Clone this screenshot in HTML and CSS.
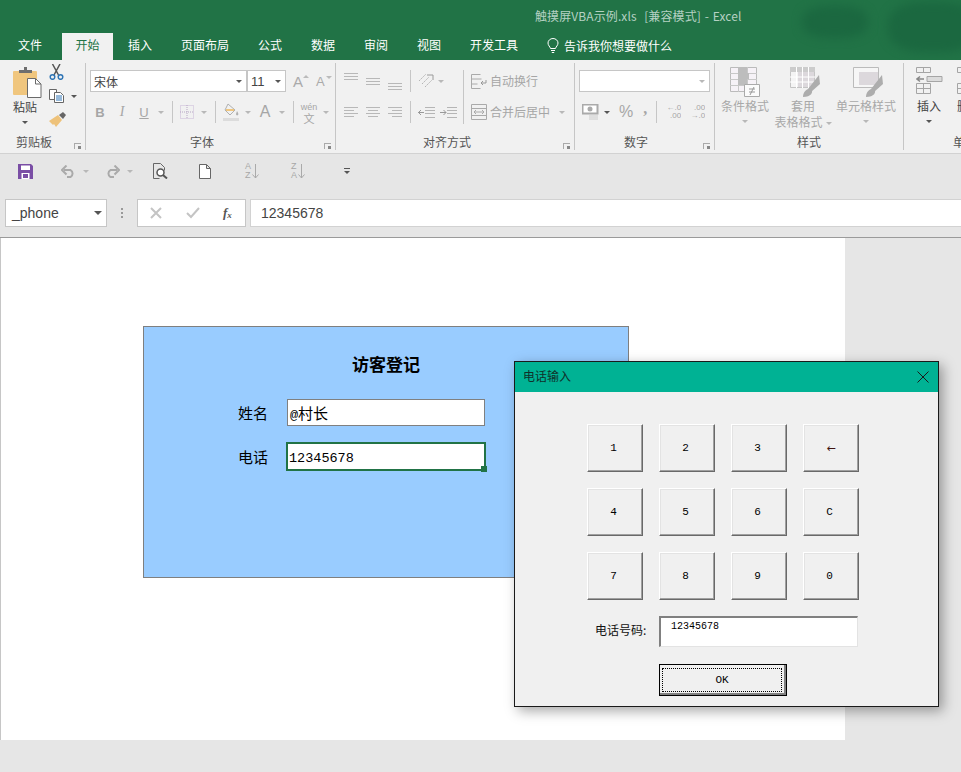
FILE: index.html
```html
<!DOCTYPE html>
<html>
<head>
	<meta charset="utf-8">
	<title>触摸屏VBA示例.xls</title>
	<link rel="stylesheet" href="styles.css">
</head>
<body>
	<div id="app">
		<div class="top">
			<div class="blob blob-a"></div>
			<div class="blob blob-b"></div>
			<div class="title">触摸屏VBA示例.xls&nbsp; [兼容模式] - Excel</div>
			<ul class="tabs">
				<li class="tab-file">文件</li>
				<li class="current">开始</li>
				<li class="tab-insert">插入</li>
				<li class="tab-page">页面布局</li>
				<li class="tab-formula">公式</li>
				<li class="tab-data">数据</li>
				<li class="tab-review">审阅</li>
				<li class="tab-view">视图</li>
				<li class="tab-dev">开发工具</li>
				<li class="tab-tell">
					<svg width="12" height="16" viewBox="0 0 12 16"><path d="M3.5 10.500C3 8.500 1 7.500 1 5a5 4.500 0 0 1 10 0c0 2.500-2 3.500-2.500 5.500zM4 12.500h4M4.800 14.500h2.400" fill="none" stroke="#fff"/></svg>
					<span>告诉我你想要做什么</span>
				</li>
			</ul>
		</div>

		<div class="ribbon">
			<section class="group g-clip">
				<div class="clip-body">
					<div class="big-col">
						<svg class="paste-icon" width="29" height="31" viewBox="0 0 29 31">
							<rect x="0" y="4" width="24" height="24" rx="1" fill="#f0c67e"/>
							<path d="M6 6V3h5V0h3v3h5v3z" fill="#6e6e6e"/>
							<path d="M14.500 11.500h8l5.500 5.500v13.500H14.500z" fill="#fff" stroke="#6a6a6a"/>
							<path d="M22.500 11.500v5.500H28" fill="none" stroke="#6a6a6a"/>
						</svg>
						<span class="big-text dark">粘贴</span>
						<i class="caret dark-caret"></i>
					</div>
					<div class="small-col">
						<svg width="15" height="16" viewBox="0 0 15 16"><path d="M3.500 0l6 11M11 0L5 11" stroke="#555" stroke-width="1.500" fill="none"/><circle cx="3.500" cy="13" r="2.300" fill="none" stroke="#2f75b5" stroke-width="1.500"/><circle cx="11.500" cy="13" r="2.300" fill="none" stroke="#2f75b5" stroke-width="1.500"/></svg>
						<div class="copy-row">
							<svg width="16" height="14" viewBox="0 0 16 14"><path d="M.5.500h7v10h-7z" fill="#fff" stroke="#666"/><path d="M5.500 3.500h6l3 3v7h-9z" fill="#fff" stroke="#666"/><path d="M7 7h6M7 9h6M7 11h6" stroke="#2f75b5"/></svg>
							<i class="caret dark-caret"></i>
						</div>
						<svg width="17" height="15" viewBox="0 0 17 15"><path d="M10 3l4-3 3 3-3 4z" fill="#666"/><path d="M0 9l9-6 4 5-6 7-2-3-1 1z" fill="#eec27a"/></svg>
					</div>
				</div>
				<div class="group-name g-name-clip">剪贴板</div>
				<i class="launcher"></i>
			</section>

			<section class="group g-font">
				<div class="row row-top">
					<div class="combo combo-font"><span>宋体</span><i class="caret dark-caret"></i></div>
					<div class="combo combo-size"><span>11</span><i class="caret dark-caret"></i></div>
					<span class="grow-a">A<i class="up"></i></span>
					<span class="grow-a small-a">A<i class="down"></i></span>
				</div>
				<div class="row row-bottom">
					<b class="tool b-tool">B</b>
					<em class="tool i-tool">I</em>
					<u class="tool u-tool">U</u>
					<i class="caret-box"><i class="caret"></i></i>
					<i class="sep sep-tight"></i>
					<span class="tool">
						<svg width="14" height="14" viewBox="0 0 14 14"><path d="M.5.500h13v13H.5z" fill="none" stroke="#c9b6d6" stroke-dasharray="1 1"/><path d="M7 0v14M0 7h14" stroke="#b7a7c4" stroke-dasharray="1 1"/></svg>
					</span>
					<i class="caret-box"><i class="caret"></i></i>
					<i class="sep"></i>
					<span class="tool">
						<svg width="17" height="19" viewBox="0 0 17 19"><path d="M5 1l7 6-5 5-5-5z" fill="none" stroke="#b0b0b0"/><path d="M3 7h8" stroke="#f0c67e" stroke-width="2"/><path d="M14 8c1 2 2 3 1 4s-2 0-2-1z" fill="#b0b0b0"/><rect x="0" y="15" width="16" height="3" fill="#dcdcdc"/></svg>
					</span>
					<i class="caret-box"><i class="caret"></i></i>
					<span class="tool text-a">A</span>
					<i class="caret-box"><i class="caret"></i></i>
					<i class="sep"></i>
					<span class="tool wen"><small>wén</small><span>文</span></span>
					<i class="caret-box"><i class="caret"></i></i>
				</div>
				<div class="group-name g-name-font">字体</div>
				<i class="launcher"></i>
			</section>

			<section class="group g-align">
				<div class="row row-top">
					<span class="tool lines-top"><i></i><i></i><i></i></span>
					<span class="tool lines-mid"><i></i><i></i><i></i></span>
					<span class="tool lines-low"><i></i><i></i><i></i></span>
					<i class="sep sep-wide"></i>
					<span class="tool">
						<svg width="17" height="16" viewBox="0 0 17 16"><path d="M1 8l7-7M4 11l7-7M7 14l7-7" stroke="#b5b5b5" stroke-dasharray="2 1"/><path d="M9 2h6v5" fill="none" stroke="#9a9a9a"/></svg>
					</span>
					<i class="caret-box orient-caret"><i class="caret"></i></i>
					<i class="sep sep-tall"></i>
					<span class="text-btn">
						<svg width="16" height="15" viewBox="0 0 16 15"><path d="M.5.500h9M.5 14.500h9M.5.500v14M.5 5h10M.5 10h6" fill="none" stroke="#aaa"/><path d="M15 6v3h-5m2-2l-2 2 2 2" fill="none" stroke="#999"/></svg>
						<span>自动换行</span>
					</span>
				</div>
				<div class="row row-bottom">
					<span class="tool lines-left"><i></i><i></i><i></i><i></i></span>
					<span class="tool lines-center"><i></i><i></i><i></i><i></i></span>
					<span class="tool lines-right"><i></i><i></i><i></i><i></i></span>
					<i class="sep sep-wide"></i>
					<span class="tool">
						<svg width="17" height="11" viewBox="0 0 17 11"><path d="M7 .5h10M7 3.500h10M7 6.500h10M7 10.500h10" stroke="#b5b5b5"/><path d="M6 5.500H0M3 3L.5 5.500 3 8" fill="none" stroke="#999"/></svg>
					</span>
					<span class="tool">
						<svg width="17" height="11" viewBox="0 0 17 11"><path d="M7 .5h10M7 3.500h10M7 6.500h10M7 10.500h10" stroke="#b5b5b5"/><path d="M0 5.500h6M3.500 3L6 5.500 3.500 8" fill="none" stroke="#999"/></svg>
					</span>
					<i class="merge-gap"></i>
					<span class="text-btn">
						<svg width="16" height="16" viewBox="0 0 16 16"><path d="M.5.500h15v15H.5zM.5 4.500h15M.5 11.500h15" fill="none" stroke="#aaa"/><path d="M3 8h10M5 6L3 8l2 2M11 6l2 2-2 2" fill="none" stroke="#aaa"/></svg>
						<span>合并后居中</span>
					</span>
					<i class="caret merge-caret"></i>
				</div>
				<div class="group-name g-name-align">对齐方式</div>
				<i class="launcher"></i>
			</section>

			<section class="group g-num">
				<div class="row row-top"><div class="combo combo-num"><span></span><i class="caret"></i></div></div>
				<div class="row row-bottom">
					<svg class="money" width="17" height="16" viewBox="0 0 17 16"><path d="M.5.500h15v9H.5z" fill="#fff" stroke="#aaa" stroke-width="2"/><circle cx="8" cy="5" r="2.500" fill="#aaa"/><path d="M7 11h9M7 13h9M7 15h9" stroke="#ccc"/></svg>
					<i class="caret dark-caret money-caret"></i>
					<span class="percent">%</span>
					<span class="comma">,</span>
					<i class="sep sep-num"></i>
					<span class="dec-icon"><span>←.0</span><span>.00</span></span>
					<span class="dec-icon dec-right"><span>.00</span><span>→.0</span></span>
				</div>
				<div class="group-name g-name-num">数字</div>
				<i class="launcher"></i>
			</section>

			<section class="group g-style">
				<div class="big-row">
					<div class="big-col style-cond">
						<svg width="30" height="30" viewBox="0 0 30 30">
							<path d="M.5.500h26v24H.5z" fill="#f6f2f7" stroke="#bbb"/>
							<path d="M8.500 0v25M17.500 0v25M0 6.500h27M0 12.500h27M0 18.500h27" stroke="#c8c8c8"/>
							<path d="M8 0h9v6h2v6h-2v6H8z" fill="#bdbdbd"/>
							<path d="M14.500 17.500h15v12h-15z" fill="#fbfbfb" stroke="#aaa"/>
							<path d="M19 22h6M19 25h6M24 20l-4 8" stroke="#999" fill="none"/>
						</svg>
						<span class="big-text">条件格式</span>
						<i class="caret"></i>
					</div>
					<div class="big-col style-table">
						<svg class="style-icon" width="30" height="30" viewBox="0 0 30 30">
							<path d="M.5.500h24v20H.5z" fill="#f4f4f4" stroke="#c4c4c4"/>
							<path d="M0 5h25V0H0z" fill="#ccc"/>
							<path d="M8 5h16v15H8z" fill="#dcd8dc"/>
							<path d="M6.500 0v21M12.500 0v21M18.500 0v21M0 10h25M0 15h25" stroke="#fff"/>
							<path d="M29 8l1 9-9 8-3-3z" fill="#adadad"/>
							<path d="M13 30c0-6 5-9 8-8 3 3 0 8-8 8z" fill="#adadad"/>
						</svg>
						<span class="big-text">套用</span>
						<span class="big-text second">表格格式<i class="caret"></i></span>
					</div>
					<div class="big-col style-cell">
						<svg class="style-icon" width="30" height="30" viewBox="0 0 30 30">
							<path d="M.5.500h25v20H.5z" fill="#f6f6f6" stroke="#bbb"/>
							<path d="M6 5h19v13H6z" fill="#dcd8dc"/>
							<path d="M29 8l1 9-9 8-3-3z" fill="#adadad"/>
							<path d="M13 30c0-6 5-9 8-8 3 3 0 8-8 8z" fill="#adadad"/>
						</svg>
						<span class="big-text">单元格样式</span>
						<i class="caret"></i>
					</div>
				</div>
				<div class="group-name g-name-style">样式</div>
			</section>

			<section class="group g-cell">
				<div class="big-row">
					<div class="big-col cell-insert">
						<svg width="27" height="27" viewBox="0 0 27 27">
							<path d="M.5.500h14v5H.5zM7.500.500v5M.5 16.500h14v10H.5zM7.500 16.500v10M.5 21.500h14" fill="none" stroke="#a5a5a5"/>
							<path d="M11 9.500h15v5H11z" fill="#dcdcdc" stroke="#a5a5a5"/>
							<path d="M8 12H1M4 9.500L1 12l3 2.500" fill="none" stroke="#888" stroke-width="1.500"/>
						</svg>
						<span class="big-text dark">插入</span>
						<i class="caret dark-caret"></i>
					</div>
					<div class="big-col cell-delete">
						<svg width="27" height="27" viewBox="0 0 27 27"><path d="M.5.500h14v5H.5zM.5 16.500h14v10H.5zM.5 21.500h14" fill="none" stroke="#a5a5a5"/></svg>
						<span class="big-text dark">删除</span>
					</div>
				</div>
				<div class="group-name g-name-cell">单元格</div>
			</section>
		</div>

		<div class="qat">
			<svg class="q-save" width="15" height="15" viewBox="0 0 15 15"><path d="M0 0h13l2 2v13H0z" fill="#7a4ea5"/><path d="M3 1.500h9v4.500H3z" fill="#fff"/><path d="M3.500 9h8v6h-8z" fill="#fff"/><path d="M5 10h5v4H5z" fill="#7a4ea5"/></svg>
			<svg class="q-undo" width="15" height="13" viewBox="0 0 15 13"><path d="M3 5h6.500a4 4 0 0 1 0 7H6" fill="none" stroke="#aaa" stroke-width="2"/><path d="M5.500 .5L1 5l4.500 4.500" fill="none" stroke="#aaa" stroke-width="2"/></svg>
			<i class="caret q-caret-a"></i>
			<svg class="q-redo" width="15" height="13" viewBox="0 0 15 13"><path d="M12 5H5.500a4 4 0 0 0 0 7H9" fill="none" stroke="#aaa" stroke-width="2"/><path d="M9.500 .5L14 5 9.500 9.500" fill="none" stroke="#aaa" stroke-width="2"/></svg>
			<i class="caret q-caret-b"></i>
			<svg class="q-preview" width="15" height="16" viewBox="0 0 15 16"><path d="M.5.500h7l4 4v3M.5.500v15h6" fill="none" stroke="#666"/><circle cx="7.500" cy="9.500" r="3.500" fill="#fff" stroke="#555" stroke-width="1.500"/><path d="M10 12l4 3.500" stroke="#555" stroke-width="2"/></svg>
			<svg class="q-new" width="12" height="15" viewBox="0 0 12 15"><path d="M.5.500h7l4 4v10H.5zM7.500.500v4h4" fill="#fff" stroke="#666"/></svg>
			<span class="q-sort q-sort-a"><span>A<br>Z</span><svg width="7" height="15" viewBox="0 0 7 15"><path d="M3.500 0v14M.5 10.500l3 3.500 3-3.500" fill="none" stroke="#aaa"/></svg></span>
			<span class="q-sort q-sort-z"><span>Z<br>A</span><svg width="7" height="15" viewBox="0 0 7 15"><path d="M3.500 0v14M.5 10.500l3 3.500 3-3.500" fill="none" stroke="#aaa"/></svg></span>
			<span class="q-more"><i></i><i class="caret dark-caret"></i></span>
		</div>

		<div class="formula-bar">
			<div class="name-box"><span>_phone</span><i class="caret dark-caret"></i></div>
			<span class="dots"><i></i><i></i><i></i></span>
			<div class="fx-box">
				<svg width="12" height="12" viewBox="0 0 12 12"><path d="M1 1l10 10M11 1L1 11" stroke="#c4c4c4" stroke-width="2"/></svg>
				<svg width="14" height="12" viewBox="0 0 14 12"><path d="M1 6l4 4 8-9" fill="none" stroke="#c4c4c4" stroke-width="2"/></svg>
				<span class="fx">f<sub>x</sub></span>
			</div>
			<div class="formula-input">12345678</div>
		</div>

		<div class="sheet">
			<div class="page">
				<div class="card">
					<h1>访客登记</h1>
					<div class="form-row">
						<label>姓名</label>
						<div class="field">@<span class="cjk">村长</span></div>
					</div>
					<div class="form-row">
						<label>电话</label>
						<div class="field selected">12345678<i class="handle"></i></div>
					</div>
				</div>
			</div>
		</div>

		<div class="dialog">
			<div class="dialog-title">
				<span>电话输入</span>
				<svg width="12" height="12" viewBox="0 0 12 12"><path d="M.5.500l11 11M11.500.500l-11 11" stroke="#1a1a1a" fill="none"/></svg>
			</div>
			<div class="dialog-body">
				<div class="keypad">
					<button>1</button>
					<button>2</button>
					<button>3</button>
					<button class="back">←</button>
					<button>4</button>
					<button>5</button>
					<button>6</button>
					<button>C</button>
					<button>7</button>
					<button>8</button>
					<button>9</button>
					<button>0</button>
				</div>
				<div class="phone-row">
					<label>电话号码:</label>
					<div class="phone-input">12345678</div>
				</div>
				<button class="ok"><span>OK</span></button>
			</div>
		</div>
	</div>
</body>
</html>
```

FILE: styles.css
```css
*{
	margin: 0;
	padding: 0;
	box-sizing: border-box;
}
html, body{
	width: 961px;
	height: 772px;
	overflow: hidden;
}
body{
	font-family: "Noto Sans CJK SC", "Liberation Sans", sans-serif;
	font-size: 12px;
	color: #444;
	background: #e6e6e6;
}
li{
	list-style: none;
}
i{
	font-style: normal;
}
#app{
	position: relative;
	width: 961px;
	height: 772px;
	overflow: hidden;
}

/* title + tabs */
.top{
	position: relative;
	height: 60px;
	background: #217346;
	overflow: hidden;
}
.blob{
	position: absolute;
	background: #1b6840;
	filter: blur(5px);
	border-radius: 40%;
}
.blob-a{
	left: 802px;
	top: 6px;
	width: 66px;
	height: 32px;
}
.blob-b{
	left: 888px;
	top: 2px;
	width: 90px;
	height: 50px;
}
.title{
	height: 33px;
	padding-left: 535px;
	line-height: 32px;
	font-size: 12px;
	letter-spacing: 0.1px;
	word-spacing: 1px;
	color: #b5d1c3;
	white-space: nowrap;
}
.tabs{
	position: relative;
	display: flex;
	height: 27px;
	color: #fff;
	font-size: 12px;
	line-height: 24px;
}
.tabs li{
	white-space: nowrap;
}
.tab-file{
	margin-left: 18px;
	width: 44px;
}
.tabs .current{
	width: 51px;
	background: #f1f1f1;
	color: #217346;
	text-align: center;
}
.tab-insert{
	margin-left: 15px;
	width: 53px;
}
.tab-page{
	width: 77px;
}
.tab-formula{
	width: 53px;
}
.tab-data{
	width: 53px;
}
.tab-review{
	width: 53px;
}
.tab-view{
	width: 53px;
}
.tab-dev{
	width: 77px;
}
.tab-tell{
	display: flex;
	align-items: center;
	gap: 5px;
	height: 25px;
}

/* ribbon */
.ribbon{
	display: flex;
	height: 94px;
	background: #f1f1f1;
	border-bottom: 1px solid #d2d2d2;
	overflow: hidden;
}
.group{
	position: relative;
	flex: none;
	height: 87px;
	margin-top: 3px;
	border-right: 1px solid #c6c6c6;
}
.g-clip{
	width: 86px;
}
.g-font{
	width: 250px;
}
.g-align{
	width: 239px;
}
.g-num{
	width: 140px;
}
.g-style{
	width: 189px;
}
.g-cell{
	width: 60px;
	border-right: 0;
}
.group-name{
	position: absolute;
	top: 71px;
	height: 16px;
	line-height: 16px;
	color: #555;
	white-space: nowrap;
}
.g-name-clip{
	left: 16px;
}
.g-name-font{
	left: 104px;
}
.g-name-align{
	left: 87px;
}
.g-name-num{
	left: 49px;
}
.g-name-style{
	left: 82px;
}
.g-name-cell{
	left: 49px;
}
.launcher{
	position: absolute;
	right: 4px;
	top: 80px;
	width: 7px;
	height: 6px;
	border-left: 1px solid #aaa;
	border-top: 1px solid #aaa;
}
.launcher::after{
	content: "";
	position: absolute;
	right: 0;
	bottom: 0;
	width: 3px;
	height: 3px;
	background: #888;
}
.caret{
	display: inline-block;
	width: 0;
	height: 0;
	border-left: 3px solid transparent;
	border-right: 3px solid transparent;
	border-top: 3px solid #b8b8b8;
}
.dark-caret{
	border-top-color: #555;
}
.caret-box{
	display: flex;
	justify-content: center;
	align-items: center;
	width: 12px;
	height: 22px;
}
.row{
	display: flex;
	align-items: center;
	height: 22px;
}
.row-top{
	margin-top: 7px;
}
.row-bottom{
	margin-top: 9px;
}
.tool{
	display: flex;
	flex: none;
	justify-content: center;
	align-items: center;
	width: 22px;
	height: 22px;
	color: #a6a6a6;
}
.sep{
	flex: none;
	width: 1px;
	height: 22px;
	margin: 0 4px 0 5px;
	background: #c6c6c6;
}
.sep-tight{
	margin-right: 3px;
}

/* clipboard */
.clip-body{
	display: flex;
	height: 70px;
}
.big-col{
	display: flex;
	flex: none;
	flex-direction: column;
	align-items: center;
}
.clip-body .big-col{
	width: 49px;
	padding: 4px 0 0 1px;
}
.paste-icon{
	margin-left: 4px;
}
.big-text{
	margin-top: 1px;
	height: 16px;
	line-height: 16px;
	color: #a8a8a8;
	white-space: nowrap;
}
.big-text.dark{
	color: #444;
}
.big-text.second{
	margin-top: 0;
}
.big-text .caret{
	margin-left: 3px;
	vertical-align: middle;
}
.big-col > .caret{
	margin-top: 6px;
}
.small-col{
	display: flex;
	flex-direction: column;
	align-items: flex-start;
	padding-top: 1px;
	gap: 9px;
}
.copy-row{
	display: flex;
	align-items: center;
	gap: 6px;
}

/* font group */
.g-font .row{
	padding-left: 3px;
}
.g-font .row-top{
	padding-left: 4px;
}
.combo{
	display: flex;
	flex: none;
	justify-content: space-between;
	align-items: center;
	height: 22px;
	padding: 0 4px 0 3px;
	background: #fff;
	border: 1px solid #c6c6c6;
	color: #444;
}
.combo-font{
	width: 157px;
}
.combo-size{
	width: 39px;
	font-family: "Liberation Sans", sans-serif;
	font-size: 13px;
}
.combo-num{
	width: 131px;
	margin-left: 4px;
}
.grow-a{
	position: relative;
	width: 12px;
	margin-left: 7px;
	font-family: "Liberation Sans", sans-serif;
	font-size: 15px;
	color: #aaa;
}
.small-a{
	margin-left: 11px;
	font-size: 13px;
}
.grow-a i{
	position: absolute;
	top: 2px;
	left: 10px;
	border-left: 3px solid transparent;
	border-right: 3px solid transparent;
}
.up{
	border-bottom: 3px solid #bbb;
}
.down{
	border-top: 3px solid #bbb;
}
.b-tool, .i-tool, .u-tool{
	font-family: "Liberation Sans", sans-serif;
	font-size: 13px;
}
.i-tool{
	font-family: "Liberation Serif", serif;
	font-size: 14px;
}
.text-a{
	font-family: "Liberation Sans", sans-serif;
	font-size: 16px;
}
.wen{
	flex-direction: column;
	gap: 1px;
	line-height: 10px;
	font-size: 11px;
}
.wen small{
	font-family: "Liberation Sans", sans-serif;
	font-size: 9px;
}

/* align group */
.g-align .row{
	padding-left: 4px;
}
.lines-top, .lines-mid, .lines-low, .lines-left, .lines-center, .lines-right{
	flex-direction: column;
	gap: 2px;
}
.lines-top i, .lines-mid i, .lines-low i, .lines-left i, .lines-center i, .lines-right i{
	display: block;
	width: 14px;
	height: 1px;
	background: #b8b8b8;
}
.lines-top{
	justify-content: flex-start;
	padding-top: 3px;
}
.lines-mid{
	padding-top: 1px;
}
.lines-low{
	justify-content: flex-end;
	padding-bottom: 2px;
}
.lines-left{
	align-items: flex-start;
	padding-left: 4px;
}
.lines-right{
	align-items: flex-end;
	padding-right: 4px;
}
.lines-left i:nth-child(even), .lines-center i:nth-child(even), .lines-right i:nth-child(even){
	width: 10px;
}
.sep-wide{
	margin: 0 4px;
}
.orient-caret{
	margin-left: -2px;
}
.sep-tall{
	align-self: flex-start;
	height: 54px;
	margin: 0 7px 0 16px;
}
.merge-gap{
	flex: none;
	width: 12px;
}
.text-btn{
	display: flex;
	flex: none;
	align-items: center;
	gap: 3px;
	color: #a6a6a6;
	white-space: nowrap;
}
.text-btn span{
	padding-bottom: 2px;
}
.merge-caret{
	margin-left: 9px;
}

/* number group */
.money{
	margin-left: 7px;
}
.money-caret{
	margin-left: 5px;
}
.percent{
	margin-left: 9px;
	font-family: "Liberation Sans", sans-serif;
	font-size: 16px;
	color: #a6a6a6;
}
.comma{
	margin-left: 10px;
	padding-bottom: 6px;
	font-family: "Liberation Serif", serif;
	font-size: 16px;
	font-weight: bold;
	color: #a6a6a6;
}
.sep-num{
	margin: 0 7px 0 9px;
}
.dec-icon{
	display: flex;
	flex-direction: column;
	width: 17px;
	font-family: "Liberation Sans", sans-serif;
	font-size: 8px;
	line-height: 8px;
	text-align: right;
	color: #a6a6a6;
	white-space: nowrap;
}
.dec-icon span{
	height: 8px;
	overflow: hidden;
}
.dec-right{
	margin-left: 7px;
}

/* style + cell groups */
.big-row{
	display: flex;
	height: 70px;
}
.big-row .big-col{
	padding-top: 4px;
}
.style-icon{
	margin-left: 4px;
}
.style-cond{
	width: 60px;
}
.style-table{
	width: 56px;
}
.style-cell{
	width: 70px;
}
.cell-insert{
	width: 50px;
}
.cell-insert svg, .cell-delete svg{
	margin-bottom: 3px;
}
.cell-delete{
	width: 10px;
	margin-left: 3px;
	overflow: hidden;
	align-items: flex-start;
}

/* quick access */
.qat{
	position: relative;
	display: flex;
	align-items: center;
	height: 43px;
	padding-bottom: 9px;
	background: #e6e6e6;
}
.qat > *{
	flex: none;
}
.q-save{
	margin-left: 18px;
}
.q-undo{
	margin-left: 28px;
}
.q-caret-a{
	margin-left: 7px;
}
.q-redo{
	margin-left: 16px;
}
.q-caret-b{
	margin-left: 7px;
}
.q-preview{
	margin-left: 20px;
}
.q-new{
	margin-left: 31px;
}
.q-sort{
	display: flex;
	align-items: center;
	gap: 1px;
	width: 16px;
	margin-left: 34px;
	font-family: "Liberation Sans", sans-serif;
	font-size: 9px;
	line-height: 9px;
	color: #a6a6a6;
}
.q-sort-z{
	margin-left: 30px;
}
.q-more{
	display: flex;
	flex-direction: column;
	align-items: center;
	gap: 2px;
	margin-left: 37px;
}
.q-more i:first-child{
	width: 6px;
	height: 1px;
	background: #555;
}

/* formula bar */
.formula-bar{
	display: flex;
	align-items: center;
	height: 40px;
	padding: 0 0 8px 5px;
	background: #e6e6e6;
}
.name-box{
	display: flex;
	flex: none;
	justify-content: space-between;
	align-items: center;
	width: 102px;
	height: 28px;
	padding: 0 4px 0 6px;
	background: #fff;
	border: 1px solid #c6c6c6;
	font-family: "Liberation Sans", sans-serif;
	font-size: 14px;
	color: #444;
}
.name-box .caret{
	border-width: 4px 4px 0;
}
.dots{
	display: flex;
	flex: none;
	flex-direction: column;
	align-items: center;
	gap: 2px;
	width: 30px;
}
.dots i{
	width: 2px;
	height: 2px;
	background: #999;
}
.fx-box{
	display: flex;
	flex: none;
	align-items: center;
	width: 109px;
	height: 28px;
	padding-left: 12px;
	gap: 24px;
	background: #fff;
	border: 1px solid #c6c6c6;
}
.fx{
	margin-left: -1px;
	font-family: "Liberation Serif", serif;
	font-style: italic;
	font-weight: bold;
	font-size: 13px;
	color: #555;
}
.fx sub{
	font-size: 9px;
	vertical-align: -1px;
}
.formula-input{
	flex: 1;
	height: 28px;
	margin-left: 4px;
	padding-left: 10px;
	background: #fff;
	border: 1px solid #d2d2d2;
	border-right: 0;
	font-family: "Liberation Sans", sans-serif;
	font-size: 14px;
	line-height: 26px;
	color: #444;
}

/* sheet */
.sheet{
	height: 535px;
	background: #e6e6e6;
	border-top: 1px solid #9a9a9a;
}
.page{
	position: relative;
	width: 845px;
	height: 502px;
	background: #fff;
	border-left: 1px solid #c6c6c6;
}
.card{
	position: absolute;
	left: 142px;
	top: 88px;
	width: 486px;
	height: 252px;
	padding-top: 25px;
	background: #99ccff;
	border: 1px solid #7f7f7f;
	color: #000;
}
.card h1{
	height: 24px;
	margin-bottom: 23px;
	font-size: 17px;
	line-height: 24px;
	text-align: center;
	color: #000;
}
.form-row{
	display: flex;
	align-items: center;
	height: 27px;
	margin-bottom: 16px;
	padding-left: 94px;
}
.form-row label{
	width: 49px;
	font-size: 15px;
}
.form-row + .form-row label{
	padding-top: 2px;
}
.field{
	position: relative;
	width: 198px;
	height: 27px;
	padding-left: 2px;
	background: #fff;
	border: 1px solid #808080;
	font-family: "Liberation Mono", "Noto Sans CJK SC", monospace;
	font-size: 13.500px;
	line-height: 26px;
}
.cjk{
	font-family: "Noto Sans CJK SC", sans-serif;
	font-size: 15px;
}
.field.selected{
	flex: none;
	align-self: flex-start;
	width: 200px;
	height: 29px;
	margin-left: -1px;
	border: 2px solid #217346;
	line-height: 29px;
	padding-left: 1px;
}
.handle{
	position: absolute;
	right: -3px;
	bottom: -3px;
	width: 6px;
	height: 6px;
	background: #217346;
}

/* dialog */
.dialog{
	position: absolute;
	left: 514px;
	top: 361px;
	width: 425px;
	height: 346px;
	background: #f0f0f0;
	border: 1px solid #1a1a1a;
	box-shadow: 4px 4px 12px rgba(0, 0, 0, 0.35);
}
.dialog-title{
	display: flex;
	justify-content: space-between;
	align-items: center;
	height: 30px;
	padding: 0 9px 0 8px;
	background: #00b294;
	color: #10302a;
}
.dialog-title span{
	padding-bottom: 3px;
}
.dialog-body{
	padding: 32px 0 0 72px;
}
.keypad{
	display: grid;
	grid-template-columns: repeat(4, 56px);
	grid-auto-rows: 48px;
	gap: 16px;
}
button{
	display: block;
	padding: 0 3px 0 0;
	background: #f0f0f0;
	border: 1px solid;
	border-color: #fff #696969 #696969 #fff;
	box-shadow: inset -1px -1px 0 #a0a0a0, inset 1px 1px 0 #e3e3e3;
	font-family: "Liberation Mono", monospace;
	font-size: 11px;
	color: #000;
}
.back{
	padding: 0;
	font-family: "DejaVu Sans", sans-serif;
	font-size: 11px;
	color: #401410;
}
.phone-row{
	display: flex;
	align-items: center;
	margin-top: 16px;
}
.phone-row label{
	width: 72px;
	padding: 0 0 4px 8px;
	color: #111;
	white-space: nowrap;
}
.phone-input{
	width: 199px;
	height: 31px;
	padding: 3px 0 0 10px;
	background: #fff;
	border: 1px solid;
	border-width: 2px 1px 1px 2px;
	border-color: #808080 #e3e3e3 #e3e3e3 #808080;
	font-family: "Liberation Mono", monospace;
	font-size: 10px;
	line-height: 12px;
	color: #000;
}
.ok{
	width: 128px;
	height: 32px;
	margin: 17px 0 0 72px;
	padding: 2px;
	border: 1px solid #000;
	box-shadow: inset -2px -2px 0 #808080;
}
.ok span{
	display: block;
	height: 24px;
	margin-right: 2px;
	line-height: 22px;
	border: 1px dotted #000;
}
```
